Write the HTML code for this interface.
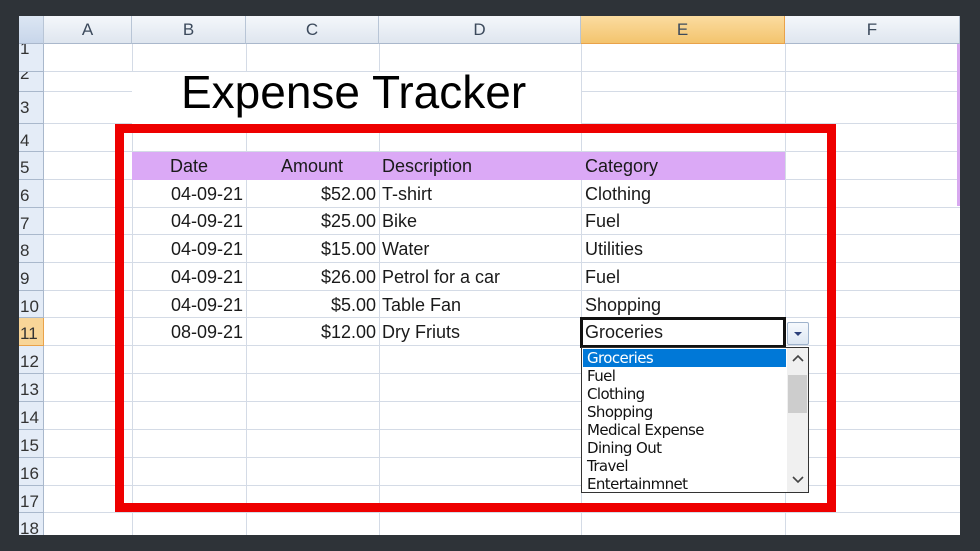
<!DOCTYPE html>
<html><head><meta charset="utf-8"><style>
*{margin:0;padding:0;box-sizing:border-box}
body{width:980px;height:551px;background:#2e3338;position:relative;overflow:hidden;font-family:"Liberation Sans",sans-serif}
#sheet{position:absolute;left:19px;top:16px;width:941px;height:519px;background:#fff;overflow:hidden}
.a{position:absolute}
.hl{position:absolute;height:1px;background:#d4dbe6}
.vl{position:absolute;width:1px;background:#d4dbe6}
.ch{position:absolute;top:0;height:28px;background:linear-gradient(#f4f7fb,#dfe6ef);border-right:1px solid #b8c5d6;border-bottom:1px solid #aab8cc;color:#3c4a5c;font-size:17px;text-align:center;line-height:28px}
.rh{position:absolute;left:0;width:25px;background:#e4ecf7;border-bottom:1px solid #a9b8cc;border-right:1px solid #a9b8cc;color:#333;font-size:17px;padding-left:1px;overflow:hidden}
.t{position:absolute;font-size:18px;color:#1a1a1a;line-height:20px;white-space:nowrap}
.r{text-align:right}
.li{position:absolute;left:5px;font-size:15px;line-height:18px;color:#111;font-family:"DejaVu Sans","Liberation Sans",sans-serif;letter-spacing:-0.6px}
</style></head><body>
<div id="sheet">
<div class="ch" style="left:0;width:25px;background:linear-gradient(#dce6f3,#c8d6ea)"></div>
<div class="ch" style="left:25px;width:88px">A</div>
<div class="ch" style="left:113px;width:114px">B</div>
<div class="ch" style="left:227px;width:133px">C</div>
<div class="ch" style="left:360px;width:202px">D</div>
<div class="ch" style="left:562px;width:204px;background:linear-gradient(#fbdca0,#f3c46e);border-color:#e9a24a">E</div>
<div class="ch" style="left:766px;width:175px">F</div>
<div class="hl" style="left:25px;width:916px;top:55px"></div>
<div class="hl" style="left:25px;width:916px;top:75px"></div>
<div class="hl" style="left:25px;width:916px;top:107px"></div>
<div class="hl" style="left:25px;width:916px;top:135px"></div>
<div class="hl" style="left:25px;width:916px;top:163px"></div>
<div class="hl" style="left:25px;width:916px;top:191px"></div>
<div class="hl" style="left:25px;width:916px;top:218px"></div>
<div class="hl" style="left:25px;width:916px;top:246px"></div>
<div class="hl" style="left:25px;width:916px;top:274px"></div>
<div class="hl" style="left:25px;width:916px;top:301px"></div>
<div class="hl" style="left:25px;width:916px;top:329px"></div>
<div class="hl" style="left:25px;width:916px;top:357px"></div>
<div class="hl" style="left:25px;width:916px;top:385px"></div>
<div class="hl" style="left:25px;width:916px;top:413px"></div>
<div class="hl" style="left:25px;width:916px;top:441px"></div>
<div class="hl" style="left:25px;width:916px;top:469px"></div>
<div class="hl" style="left:25px;width:916px;top:496px"></div>
<div class="vl" style="left:113px;top:28px;height:491px"></div>
<div class="vl" style="left:227px;top:28px;height:491px"></div>
<div class="vl" style="left:360px;top:28px;height:491px"></div>
<div class="vl" style="left:562px;top:28px;height:491px"></div>
<div class="vl" style="left:766px;top:28px;height:491px"></div>
<div class="a" style="left:938px;top:28px;width:3px;height:162px;background:#d8a8ef"></div>
<div class="rh" style="top:28px;height:28px;line-height:10px">1</div>
<div class="rh" style="top:56px;height:20px;line-height:4px">2</div>
<div class="rh" style="top:76px;height:32px;line-height:32px">3</div>
<div class="rh" style="top:108px;height:28px;line-height:34px">4</div>
<div class="rh" style="top:136px;height:28px;line-height:32px">5</div>
<div class="rh" style="top:164px;height:28px;line-height:32px">6</div>
<div class="rh" style="top:192px;height:27px;line-height:32px">7</div>
<div class="rh" style="top:219px;height:28px;line-height:32px">8</div>
<div class="rh" style="top:247px;height:28px;line-height:32px">9</div>
<div class="rh" style="top:275px;height:27px;line-height:32px">10</div>
<div class="rh" style="top:302px;height:28px;line-height:32px;background:#f8d598;border-color:#e9a24a">11</div>
<div class="rh" style="top:330px;height:28px;line-height:32px">12</div>
<div class="rh" style="top:358px;height:28px;line-height:32px">13</div>
<div class="rh" style="top:386px;height:28px;line-height:32px">14</div>
<div class="rh" style="top:414px;height:28px;line-height:32px">15</div>
<div class="rh" style="top:442px;height:28px;line-height:32px">16</div>
<div class="rh" style="top:470px;height:27px;line-height:32px">17</div>
<div class="rh" style="top:497px;height:28px;line-height:32px">18</div>
<div class="a" style="left:113px;top:56px;width:449px;height:52px;background:#fff"></div>
<div class="t" style="left:162px;top:51px;font-size:46px;line-height:50px;color:#000">Expense Tracker</div>
<div class="a" style="left:113px;top:136px;width:653px;height:28px;background:#dba9f6"></div>
<div class="t" style="left:151px;top:140px">Date</div>
<div class="t" style="left:262px;top:140px">Amount</div>
<div class="t" style="left:363px;top:140px">Description</div>
<div class="t" style="left:566px;top:140px">Category</div>
<div class="t r" style="left:113px;width:111px;top:168px">04-09-21</div>
<div class="t r" style="left:227px;width:130px;top:168px">$52.00</div>
<div class="t" style="left:363px;top:168px">T-shirt</div>
<div class="t" style="left:566px;top:168px">Clothing</div>
<div class="t r" style="left:113px;width:111px;top:195px">04-09-21</div>
<div class="t r" style="left:227px;width:130px;top:195px">$25.00</div>
<div class="t" style="left:363px;top:195px">Bike</div>
<div class="t" style="left:566px;top:195px">Fuel</div>
<div class="t r" style="left:113px;width:111px;top:223px">04-09-21</div>
<div class="t r" style="left:227px;width:130px;top:223px">$15.00</div>
<div class="t" style="left:363px;top:223px">Water</div>
<div class="t" style="left:566px;top:223px">Utilities</div>
<div class="t r" style="left:113px;width:111px;top:251px">04-09-21</div>
<div class="t r" style="left:227px;width:130px;top:251px">$26.00</div>
<div class="t" style="left:363px;top:251px">Petrol for a car</div>
<div class="t" style="left:566px;top:251px">Fuel</div>
<div class="t r" style="left:113px;width:111px;top:279px">04-09-21</div>
<div class="t r" style="left:227px;width:130px;top:279px">$5.00</div>
<div class="t" style="left:363px;top:279px">Table Fan</div>
<div class="t" style="left:566px;top:279px">Shopping</div>
<div class="t r" style="left:113px;width:111px;top:306px">08-09-21</div>
<div class="t r" style="left:227px;width:130px;top:306px">$12.00</div>
<div class="t" style="left:363px;top:306px">Dry Friuts</div>
<div class="a" style="left:96px;top:108px;width:721px;height:388px;border:9px solid #ee0000"></div>
<div class="a" style="left:561px;top:301px;width:206px;height:31px;border:3px solid #111;background:#fff"></div>
<div class="t" style="left:566px;top:306px">Groceries</div>
<div class="a" style="left:768px;top:306px;width:22px;height:23px;border:1px solid #9fb3cc;border-radius:2px;background:linear-gradient(#f6f9fd,#dde7f3)"><div class="a" style="left:6px;top:9px;width:0;height:0;border-left:4px solid transparent;border-right:4px solid transparent;border-top:4px solid #2b3f7a"></div></div>
<div class="a" style="left:562px;top:331px;width:228px;height:146px;border:1px solid #333;background:#fff">
<div class="a" style="left:1px;top:1px;width:203px;height:18px;background:#0078d7"></div>
<div class="li" style="top:1px;color:#fff">Groceries</div>
<div class="li" style="top:19px">Fuel</div>
<div class="li" style="top:37px">Clothing</div>
<div class="li" style="top:55px">Shopping</div>
<div class="li" style="top:73px">Medical Expense</div>
<div class="li" style="top:91px">Dining Out</div>
<div class="li" style="top:109px">Travel</div>
<div class="li" style="top:127px">Entertainmnet</div>
<div class="a" style="left:205px;top:0;width:21px;height:144px;background:#f0f0f0"></div>
<div class="a" style="left:206px;top:27px;width:19px;height:38px;background:#cdcdcd"></div>
<svg class="a" style="left:209px;top:5px" width="14" height="10"><path d="M2 8 L7 3 L12 8" stroke="#444" stroke-width="1.6" fill="none"/></svg>
<svg class="a" style="left:209px;top:127px" width="14" height="10"><path d="M2 2 L7 7 L12 2" stroke="#444" stroke-width="1.6" fill="none"/></svg>
</div>
</div>
</body></html>
